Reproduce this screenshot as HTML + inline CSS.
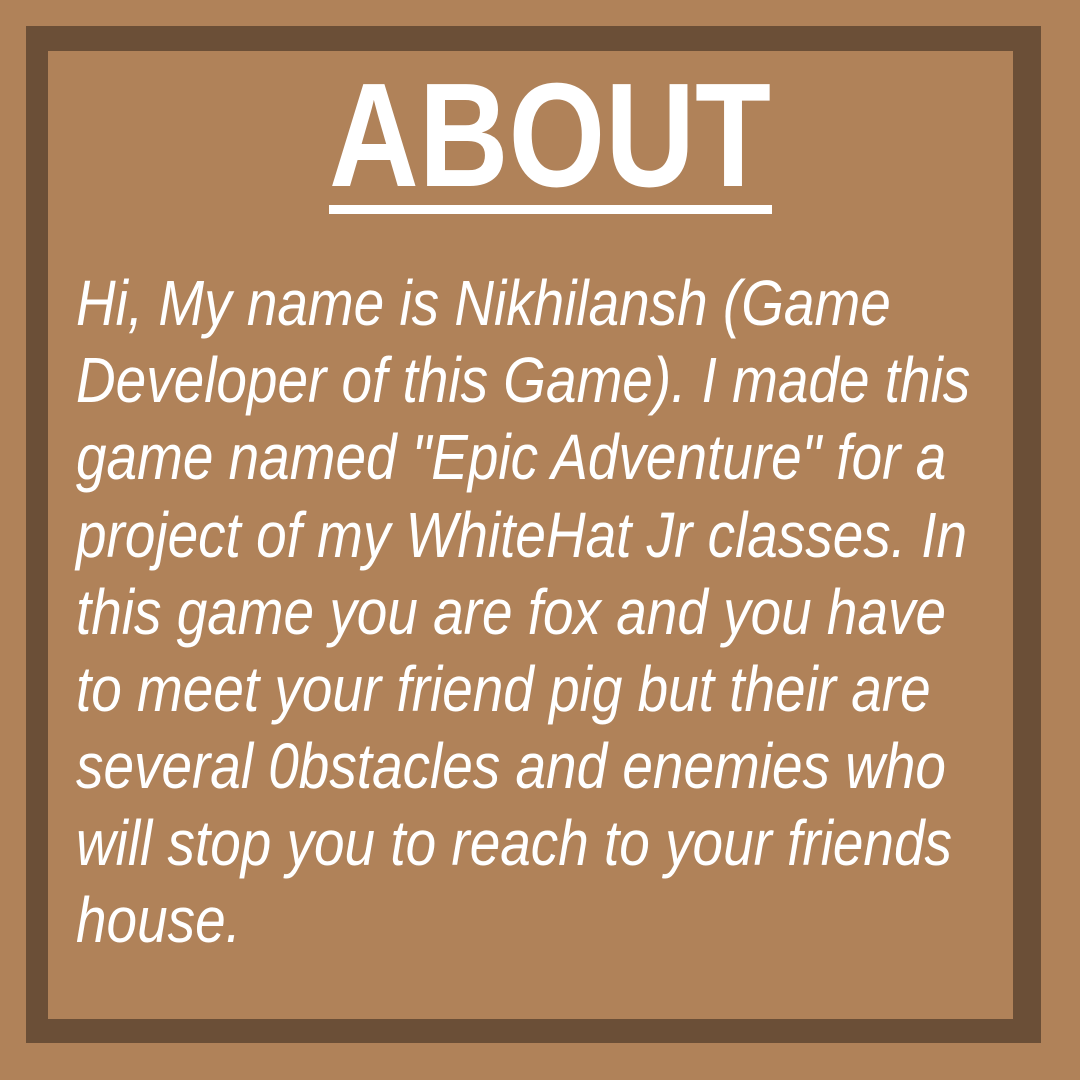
<!DOCTYPE html>
<html><head><meta charset="utf-8"><style>
html,body{margin:0;padding:0;}
body{width:1080px;height:1080px;background:#b08259;position:relative;overflow:hidden;font-family:"Liberation Sans",sans-serif;color:#fff;}
.outer{position:absolute;left:26px;top:26px;width:1015px;height:1017px;background:#6b4f37;}
.inner{position:absolute;left:48px;top:51px;width:965px;height:968px;background:#b08259;}
.title{position:absolute;left:329px;top:61px;font-weight:bold;font-size:148px;line-height:150px;white-space:nowrap;transform:scaleX(0.84);transform-origin:left top;}
.ul{position:absolute;left:329px;top:205px;width:443px;height:9px;background:#fff;}
.l{position:absolute;left:76px;font-style:italic;font-size:64px;line-height:64px;white-space:nowrap;transform:scaleX(0.858);transform-origin:left top;}
</style></head><body>
<div class="outer"></div><div class="inner"></div>
<div class="title">ABOUT</div>
<div class="ul"></div>
<div class="l" style="top:271px">Hi, My name is Nikhilansh (Game</div>
<div class="l" style="top:348px">Developer of this Game). I made this</div>
<div class="l" style="top:425px">game named "Epic Adventure" for a</div>
<div class="l" style="top:503px">project of my WhiteHat Jr classes. In</div>
<div class="l" style="top:580px">this game you are fox and you have</div>
<div class="l" style="top:657px">to meet your friend pig but their are</div>
<div class="l" style="top:734px">several 0bstacles and enemies who</div>
<div class="l" style="top:811px">will stop you to reach to your friends</div>
<div class="l" style="top:888px">house.</div>
</body></html>
